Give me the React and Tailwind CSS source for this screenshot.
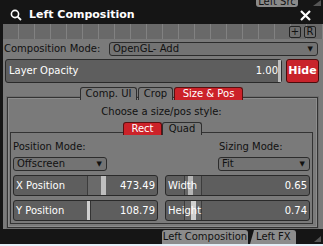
import { useState } from "react";

const FONT = { fontFamily: '"DejaVu Sans", Verdana, sans-serif' };

function Dropdown({ label, className = "" }) {
  return (
    <div
      className={`flex items-center justify-between h-[14px] rounded-[3px] border border-[#2c2c2c] bg-[#737373] pl-[3px] pr-[4px] text-[10px] leading-none text-[#111] ${className}`}
    >
      <span>{label}</span>
      <span className="text-[7px] text-[#111]">▼</span>
    </div>
  );
}

function Slider({ label, value, handle, className = "" }) {
  return (
    <div
      className={`relative flex items-center justify-between h-[21px] rounded-[3px] border border-[#2a2a2a] bg-[#5e5e5e] px-[2px] text-[10px] leading-none text-white ${className}`}
    >
      {handle}
      <span className="relative">{label}</span>
      <span className="relative">{value}</span>
    </div>
  );
}

function Tab({ children, active, className = "" }) {
  return (
    <div
      className={`h-[13px] flex items-center justify-center rounded-t-[3px] border border-b-0 text-[10px] leading-none ${
        active
          ? "bg-[#cc2229] border-[#5a1010] text-white"
          : "bg-[#7a7a7a] border-[#2e2e2e] text-[#111]"
      } ${className}`}
    >
      {children}
    </div>
  );
}

export default function App() {
  const [tab] = useState("size");
  const cells = Array.from({ length: 20 });

  return (
    <div
      style={FONT}
      className="w-[323px] h-[246px] bg-[#151515] flex flex-col overflow-hidden"
    >
      {/* header */}
      <div className="relative h-[24px] flex items-center shrink-0">
        <div className="absolute left-[256px] top-[-4px] h-[11px] w-[42px] rounded-b-[3px] bg-[#8a8a8a] text-[10px] leading-[11px] text-[#111] text-center">
          Left Src
        </div>
        <div className="absolute left-[313px] top-0 w-0 h-0 border-l-[8px] border-l-transparent border-b-[6px] border-b-[#555]" />
        <svg width="12" height="12" viewBox="0 0 12 12" className="ml-[10px] mt-[6px]">
          <circle cx="5" cy="5" r="3.6" fill="none" stroke="#fff" strokeWidth="1.6" />
          <line x1="7.6" y1="7.6" x2="11" y2="11" stroke="#fff" strokeWidth="1.8" />
        </svg>
        <span className="ml-[7px] mt-[6px] text-[11px] font-bold text-white">
          Left Composition
        </span>
        <svg width="11" height="11" viewBox="0 0 11 11" className="ml-auto mr-[12px] mt-[7px]">
          <path d="M1 1 L10 10 M10 1 L1 10" stroke="#fff" strokeWidth="2.2" />
        </svg>
      </div>

      {/* main panel */}
      <div className="ml-[3px] h-[205px] bg-[#7a7a7a] flex flex-col shrink-0">
        <div className="relative h-[15px] flex items-stretch bg-[#696969] overflow-hidden">
          {cells.map((_, i) => (
            <div key={i} className="w-[16px] shrink-0 border-r border-[#818181]" />
          ))}
          <div className="absolute right-[7px] top-[2px] flex gap-[3px]">
            <div className="w-[12px] h-[12px] rounded-[2px] border border-[#222] bg-[#6e6e6e] text-[10px] leading-[10px] text-center text-[#111]">
              +
            </div>
            <div className="w-[12px] h-[12px] rounded-[2px] border border-[#222] bg-[#6e6e6e] text-[10px] leading-[10px] text-center text-[#111]">
              R
            </div>
          </div>
        </div>

        <div className="mt-[3px] flex items-center pl-[1px] pr-[5px]">
          <span className="text-[10px] leading-none text-[#111]">Composition Mode:</span>
          <Dropdown label="OpenGL- Add" className="ml-auto w-[209px]" />
        </div>

        <div className="mt-[3px] flex items-center pl-[2px] pr-[4px] gap-[4px]">
          <Slider
            label="Layer Opacity"
            value="1.00"
            className="flex-1 !h-[24px] !px-[3px]"
            handle={<div className="absolute right-0 top-0 bottom-0 w-[3px] bg-[#bdbdbd]" />}
          />
          <div className="w-[33px] h-[24px] rounded-[3px] border border-[#4a0c0c] bg-[#c9232b] flex items-center justify-center text-[11px] font-bold text-white">
            Hide
          </div>
        </div>

        <div className="relative z-10 mt-[4px] -mb-[3px] flex justify-start pl-[77px] gap-[1px]">
          <Tab active={tab === "ui"} className="w-[57px]">Comp. UI</Tab>
          <Tab active={tab === "crop"} className="w-[35px]">Crop</Tab>
          <Tab active={tab === "size"} className="w-[69px]">Size &amp; Pos</Tab>
        </div>

        <div className="ml-[4px] mr-[5px] h-[131px] border border-[#333] shadow-[inset_0_0_0_1px_#8c8c8c,0_0_0_1px_#6e6e6e] flex flex-col pl-[2px] pr-[4px] pb-[3px]">
          <div className="mt-[8px] h-[12px] text-center text-[10px] leading-[12px] text-[#111]">
            Choose a size/pos style:
          </div>
          <div className="relative z-10 mt-[4px] -mb-[3px] flex justify-center pl-[2px]">
            <Tab active className="w-[39px]">Rect</Tab>
            <Tab className="w-[40px]">Quad</Tab>
          </div>
          <div className="flex-1 border border-[#333] flex flex-col px-[2px]">
            <div className="mt-[8px] flex justify-between">
              <div className="flex flex-col">
                <span className="h-[12px] text-[10px] leading-[12px] text-[#111]">Position Mode:</span>
                <Dropdown label="Offscreen" className="mt-[4px] w-[94px]" />
              </div>
              <div className="flex flex-col">
                <span className="h-[12px] text-[10px] leading-[12px] text-[#111] pl-[1px]">Sizing Mode:</span>
                <Dropdown label="Fit" className="mt-[4px] w-[92px]" />
              </div>
            </div>
            <div className="mt-[4px] grid grid-cols-2 gap-x-[7px] gap-y-[4px]">
              <Slider
                label="X Position"
                value="473.49"
                handle={
                  <div className="absolute left-[73px] top-0 bottom-0 w-[19px] border-l border-[#3c3c3c] bg-[#6a6a6a]">
                    <div className="absolute right-0 top-0 bottom-0 w-[5px] bg-[#bfbfbf]" />
                  </div>
                }
              />
              <Slider
                label="Width"
                value="0.65"
                handle={
                  <div className="absolute left-[18px] top-0 bottom-0 w-[18px] border-l border-r border-[#3c3c3c] bg-[#666]">
                    <div className="absolute left-[3px] top-0 bottom-0 w-[5px] bg-[#b5b5b5]" />
                  </div>
                }
              />
              <Slider
                label="Y Position"
                value="108.79"
                handle={
                  <div className="absolute left-[73px] top-0 bottom-0 w-[4px] border-r border-[#333] bg-[#d0d0d0]" />
                }
              />
              <Slider
                label="Height"
                value="0.74"
                handle={
                  <div className="absolute left-[18px] top-0 bottom-0 w-[18px] border-l border-r border-[#3c3c3c] bg-[#666]">
                    <div className="absolute left-[6px] top-0 bottom-0 w-[5px] bg-[#d0d0d0]" />
                  </div>
                }
              />
            </div>
          </div>
        </div>
      </div>

      {/* bottom tabs */}
      <div className="h-[15px] flex items-end shrink-0 relative">
        <div className="ml-[162px] w-[86px] h-[14px] rounded-t-[3px] bg-[#8c8c8c] text-[10px] leading-[14px] text-center text-[#111]">
          Left Composition
        </div>
        <div className="ml-[2px] w-[46px] h-[14px] pl-[6px] rounded-t-[3px] bg-[#8c8c8c] text-[10px] leading-[14px] text-[#111] [clip-path:polygon(4px_0,100%_0,100%_100%,0_100%)]">
          Left FX
        </div>
        <div className="absolute left-[314px] bottom-[2px] w-0 h-0 border-l-[7px] border-l-transparent border-b-[6px] border-b-[#555]" />
      </div>
      <div className="h-[2px] bg-[#e4eff8] shrink-0" />
    </div>
  );
}
